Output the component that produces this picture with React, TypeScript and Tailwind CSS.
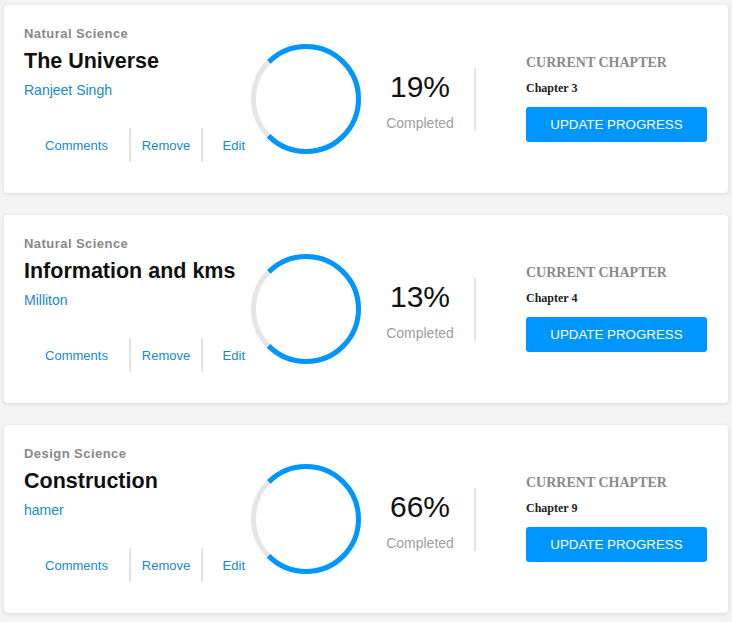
import React from "react";

type Course = {
  category: string;
  title: string;
  author: string;
  percent: number;
  chapter: string;
};

const courses: Course[] = [
  { category: "Natural Science", title: "The Universe", author: "Ranjeet Singh", percent: 19, chapter: "Chapter 3" },
  { category: "Natural Science", title: "Information and kms", author: "Milliton", percent: 13, chapter: "Chapter 4" },
  { category: "Design Science", title: "Construction", author: "hamer", percent: 66, chapter: "Chapter 9" },
];

function Ring() {
  const r = 52.5;
  const c = 2 * Math.PI * r;
  const blue = c * 0.75;
  return (
    <svg width="110" height="110" viewBox="0 0 110 110" className="shrink-0">
      <circle cx="55" cy="55" r={r} fill="none" stroke="#e6e6e6" strokeWidth="5" />
      <circle
        cx="55"
        cy="55"
        r={r}
        fill="none"
        stroke="#0096ff"
        strokeWidth="5"
        strokeDasharray={`${blue} ${c}`}
        transform="rotate(-135 55 55)"
      />
    </svg>
  );
}

function Card({ course }: { course: Course }) {
  return (
    <div className="h-[188px] bg-white rounded-[4px] shadow-[0_1px_4px_rgba(0,0,0,0.12)] flex items-center pl-[20px]">
      <div className="self-start w-[227px] pt-[21px] flex flex-col shrink-0">
        <div className="text-[13px] leading-[16px] font-bold text-[#888888] tracking-[0.45px]">{course.category}</div>
        <div className="mt-[6px] text-[21.5px] leading-[26px] font-bold text-[#111111]">{course.title}</div>
        <div className="mt-[7px] text-[14px] leading-[18px] text-[#168acd]">{course.author}</div>
        <div className="mt-[29px] h-[34px] flex items-stretch text-[13px] text-[#168acd]">
          <div className="w-[105px] pt-[2px] flex items-center justify-center">Comments</div>
          <div className="w-[2px] bg-[#e4e4e4]" />
          <div className="w-[70px] pt-[2px] flex items-center justify-center">Remove</div>
          <div className="w-[2px] bg-[#e4e4e4]" />
          <div className="w-[48px] pt-[2px] flex items-center justify-end pr-[6px]">Edit</div>
        </div>
      </div>
      <Ring />
      <div className="w-[113px] pl-[5px] mt-[4px] flex flex-col items-center shrink-0">
        <div className="text-[30px] leading-[34px] text-[#111111]">{course.percent}%</div>
        <div className="mt-[10px] text-[14px] leading-[18px] text-[#a0a0a0]">Completed</div>
      </div>
      <div className="w-[2px] h-[63px] bg-[#e6e6e6] shrink-0" />
      <div className="self-start mt-[49px] ml-[50px] flex flex-col" style={{ fontFamily: '"Liberation Serif", "Times New Roman", serif' }}>
        <div className="text-[14px] leading-[18px] font-bold text-[#8a8a8a]">CURRENT CHAPTER</div>
        <div className="mt-[8px] text-[12px] leading-[16px] font-bold text-[#222222]">{course.chapter}</div>
        <button
          className="mt-[11px] w-[181px] h-[35px] rounded-[3px] bg-[#0096ff] text-white text-[13.333px] flex items-center justify-center"
          style={{ fontFamily: '"Liberation Sans", Arial, sans-serif' }}
        >
          UPDATE PROGRESS
        </button>
      </div>
    </div>
  );
}

export default function App() {
  return (
    <div
      className="min-h-[622px] bg-[#f4f4f4] pt-[5px] px-[4px] pb-[9px] flex flex-col gap-[22px]"
      style={{ fontFamily: '"Liberation Sans", Arial, sans-serif' }}
    >
      {courses.map((c, i) => (
        <Card key={i} course={c} />
      ))}
    </div>
  );
}
